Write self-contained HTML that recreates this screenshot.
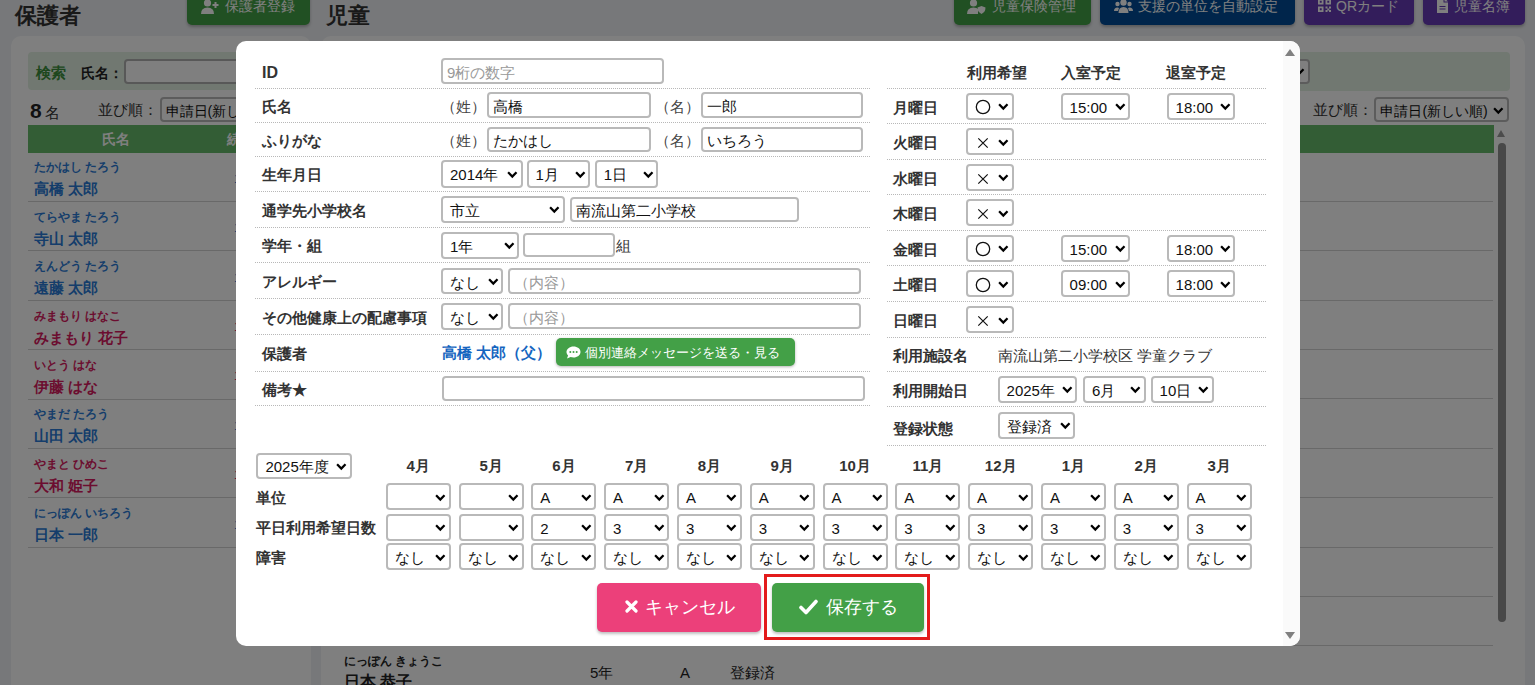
<!DOCTYPE html>
<html lang="ja"><head><meta charset="utf-8"><title>児童</title>
<style>
*{box-sizing:border-box}
html,body{margin:0;padding:0;width:1535px;height:685px;overflow:hidden}
body{background:#eef0f4;font-family:"Liberation Sans",sans-serif;color:#333;position:relative}
div{position:absolute}
.t{white-space:nowrap;font-size:15px;line-height:20px}
.b{font-weight:bold}
.overlay{left:0;top:0;width:1535px;height:685px;background:rgba(0,0,0,.5)}
.modal{left:236px;top:41px;width:1064px;height:605px;background:#fff;border-radius:10px;overflow:hidden}
.inp{border:2px solid #b9b9b9;border-radius:4px;background:#fff}
.inp .st{position:absolute;left:4px;top:calc(50% + 1.5px);transform:translateY(-50%);font-size:15px;line-height:20px;color:#111;white-space:nowrap}
.sel .st{left:7px}
.chev{position:absolute;right:2.6px;top:50%;margin-top:-2.9px}
.dl{height:1px;border-top:1px dotted #b8b8b8}
.btn{border-radius:5px;color:#fff;white-space:nowrap}
.card{background:#fff;border-radius:10px}
.bl{height:1px;background:#d3d3d3}
</style></head><body>

<div class="t b" style="left:15px;top:3px;font-size:22px;line-height:26px;color:#333">保護者</div>
<div class="t b" style="left:326px;top:3px;font-size:22px;line-height:26px;color:#333">児童</div>
<div class="btn" style="left:187px;top:-14px;width:123px;height:38.6px;background:#43a047;box-shadow:0 2px 3px rgba(0,0,0,.25)"><svg style="position:absolute;left:14px;top:13px" width="18" height="15" viewBox="0 0 18 15"><circle cx="6.5" cy="4" r="3.6" fill="#fff"/><path d="M0 15 Q0 8.5 6.5 8.5 Q13 8.5 13 15Z" fill="#fff"/><path d="M14.5 3v6M11.5 6h6" stroke="#fff" stroke-width="2"/></svg><div class="t" style="left:38px;top:10.5px;font-size:14px;line-height:18px;color:#fff">保護者登録</div></div>
<div class="btn" style="left:954px;top:-14px;width:137px;height:38.6px;background:#43a047;box-shadow:0 2px 3px rgba(0,0,0,.25)"><svg style="position:absolute;left:13px;top:13px" width="19" height="15" viewBox="0 0 19 15"><circle cx="6.5" cy="4" r="3.6" fill="#fff"/><path d="M0 15 Q0 8.5 6.5 8.5 Q10 8.5 11 10 L11 15Z" fill="#fff"/><path d="M14.5 7 L18.5 8.5 Q18.5 13 14.5 15 Q10.5 13 10.5 8.5Z" fill="#fff"/></svg><div class="t" style="left:38px;top:10.5px;font-size:14px;line-height:18px;color:#fff">児童保険管理</div></div>
<div class="btn" style="left:1100px;top:-14px;width:195px;height:38.6px;background:#004b96;box-shadow:0 2px 3px rgba(0,0,0,.25)"><svg style="position:absolute;left:14px;top:13px" width="19" height="14" viewBox="0 0 19 14"><circle cx="9.5" cy="3.5" r="3.2" fill="#fff"/><circle cx="3.5" cy="5" r="2.2" fill="#fff"/><circle cx="15.5" cy="5" r="2.2" fill="#fff"/><path d="M4.5 14 Q4.5 8 9.5 8 Q14.5 8 14.5 14Z" fill="#fff"/><path d="M0 12 Q0 8.5 3.5 8.5 Q4.5 8.5 5 9 L4 12Z M19 12 Q19 8.5 15.5 8.5 Q14.5 8.5 14 9 L15 12Z" fill="#fff"/></svg><div class="t" style="left:38px;top:10.5px;font-size:14px;line-height:18px;color:#fff">支援の単位を自動設定</div></div>
<div class="btn" style="left:1304px;top:-14px;width:110px;height:38.6px;background:#673ab7;box-shadow:0 2px 3px rgba(0,0,0,.25)"><svg style="position:absolute;left:14px;top:13px" width="13" height="13" viewBox="0 0 13 13"><path d="M0 0h5.5v5.5H0z M1.8 1.8v1.9h1.9V1.8z M7.5 0H13v5.5H7.5z M9.3 1.8v1.9h1.9V1.8z M0 7.5h5.5V13H0z M1.8 9.3v1.9h1.9V9.3z" fill="#fff" fill-rule="evenodd"/><path d="M7.5 7.5h2v2h-2zM11 7.5h2v2h-2zM9.3 9.5h2v2h-2zM7.5 11h2v2h-2zM11 11h2v2h-2z" fill="#fff"/></svg><div class="t" style="left:32px;top:10.5px;font-size:14px;line-height:18px;color:#fff">QRカード</div></div>
<div class="btn" style="left:1423px;top:-14px;width:102px;height:38.6px;background:#673ab7;box-shadow:0 2px 3px rgba(0,0,0,.25)"><svg style="position:absolute;left:14px;top:12px" width="11" height="15" viewBox="0 0 11 15"><path d="M0 0h6.5v4.5H11V15H0z M7.5 0L11 3.5H7.5z" fill="#fff"/><path d="M2.5 8.5h6M2.5 11h6" stroke="#673ab7" stroke-width="1"/></svg><div class="t" style="left:31px;top:10.5px;font-size:14px;line-height:18px;color:#fff">児童名簿</div></div>
<div class="card" style="left:11px;top:36px;width:299.5px;height:700px"></div>
<div style="left:28px;top:52px;width:300px;height:38px;background:#e2f1e2;border-radius:4px"></div>
<div class="t b" style="left:36px;top:63px;color:#3c8f3c;font-size:15px">検索</div>
<div class="t b" style="left:81px;top:63px;color:#222;font-size:14px">氏名：</div>
<div class="inp" style="left:123.7px;top:58.7px;width:206.3px;height:25.3px;border-color:#b0b0b0"></div>
<div class="t b" style="left:30px;top:99px;font-size:21px;line-height:24px;color:#222">8</div>
<div class="t" style="left:45px;top:103px;font-size:15px;color:#333">名</div>
<div class="t" style="left:98px;top:100px;font-size:15px;color:#333">並び順：</div>
<div class="inp sel" style="left:159.5px;top:96.7px;width:170.5px;height:25.5px;"><span class="st" style="left:4px;font-size:14px">申請日(新しい順)</span><svg class="chev" width="11" height="8" viewBox="0 0 11 8"><path d="M1.1 1.3 L5.3 5.5 L9.5 1.3" fill="none" stroke="#000" stroke-width="2.3"/></svg></div>
<div style="left:28px;top:125px;width:290px;height:28px;background:#66bb6a"></div>
<div class="t b" style="left:102px;top:129px;color:#fff;font-size:14px">氏名</div>
<div class="t b" style="left:227px;top:129px;color:#fff;font-size:14px">続柄</div>
<div class="t b" style="left:34px;top:160.3px;font-size:12px;line-height:14px;color:#2a7ad6">たかはし たろう</div>
<div class="t b" style="left:34px;top:179.3px;font-size:15px;line-height:20px;color:#2a7ad6">高橋 太郎</div>
<div class="t" style="left:234px;top:168.8px;font-size:13px;color:#2a7ad6">1</div>
<div class="bl" style="left:28px;top:201px;width:290px"></div>
<div class="t b" style="left:34px;top:209.70000000000002px;font-size:12px;line-height:14px;color:#2a7ad6">てらやま たろう</div>
<div class="t b" style="left:34px;top:228.70000000000002px;font-size:15px;line-height:20px;color:#2a7ad6">寺山 太郎</div>
<div class="t" style="left:234px;top:218.20000000000002px;font-size:13px;color:#2a7ad6">1</div>
<div class="bl" style="left:28px;top:250px;width:290px"></div>
<div class="t b" style="left:34px;top:259.1px;font-size:12px;line-height:14px;color:#2a7ad6">えんどう たろう</div>
<div class="t b" style="left:34px;top:278.1px;font-size:15px;line-height:20px;color:#2a7ad6">遠藤 太郎</div>
<div class="t" style="left:234px;top:267.6px;font-size:13px;color:#2a7ad6">1</div>
<div class="bl" style="left:28px;top:300px;width:290px"></div>
<div class="t b" style="left:34px;top:308.5px;font-size:12px;line-height:14px;color:#d81b60">みまもり はなこ</div>
<div class="t b" style="left:34px;top:327.5px;font-size:15px;line-height:20px;color:#d81b60">みまもり 花子</div>
<div class="t" style="left:234px;top:317.0px;font-size:13px;color:#d81b60">1</div>
<div class="bl" style="left:28px;top:349px;width:290px"></div>
<div class="t b" style="left:34px;top:357.9px;font-size:12px;line-height:14px;color:#d81b60">いとう はな</div>
<div class="t b" style="left:34px;top:376.9px;font-size:15px;line-height:20px;color:#d81b60">伊藤 はな</div>
<div class="t" style="left:234px;top:366.4px;font-size:13px;color:#d81b60">1</div>
<div class="bl" style="left:28px;top:399px;width:290px"></div>
<div class="t b" style="left:34px;top:407.3px;font-size:12px;line-height:14px;color:#2a7ad6">やまだ たろう</div>
<div class="t b" style="left:34px;top:426.3px;font-size:15px;line-height:20px;color:#2a7ad6">山田 太郎</div>
<div class="t" style="left:234px;top:415.8px;font-size:13px;color:#2a7ad6">1</div>
<div class="bl" style="left:28px;top:448px;width:290px"></div>
<div class="t b" style="left:34px;top:456.7px;font-size:12px;line-height:14px;color:#d81b60">やまと ひめこ</div>
<div class="t b" style="left:34px;top:475.7px;font-size:15px;line-height:20px;color:#d81b60">大和 姫子</div>
<div class="t" style="left:234px;top:465.2px;font-size:13px;color:#d81b60">1</div>
<div class="bl" style="left:28px;top:497px;width:290px"></div>
<div class="t b" style="left:34px;top:506.1px;font-size:12px;line-height:14px;color:#2a7ad6">にっぽん いちろう</div>
<div class="t b" style="left:34px;top:525.1px;font-size:15px;line-height:20px;color:#2a7ad6">日本 一郎</div>
<div class="t" style="left:234px;top:514.6px;font-size:13px;color:#2a7ad6">1</div>
<div class="bl" style="left:28px;top:547px;width:290px"></div>
<div class="card" style="left:321px;top:36px;width:1204px;height:700px"></div>
<div style="left:331px;top:52px;width:1178.5px;height:38.5px;background:#e2f1e2;border-radius:4px"></div>
<div class="t" style="left:1312.5px;top:100px;font-size:15px;color:#333">並び順：</div>
<div class="inp sel" style="left:1374.4px;top:96.6px;width:134.2px;height:25.7px;"><span class="st" style="left:4px;font-size:14px">申請日(新しい順)</span><svg class="chev" width="11" height="8" viewBox="0 0 11 8"><path d="M1.1 1.3 L5.3 5.5 L9.5 1.3" fill="none" stroke="#000" stroke-width="2.3"/></svg></div>
<div class="inp sel" style="left:1200px;top:58.7px;width:110px;height:25.3px;"><span class="st" style=""></span><svg class="chev" width="11" height="8" viewBox="0 0 11 8"><path d="M1.1 1.3 L5.3 5.5 L9.5 1.3" fill="none" stroke="#000" stroke-width="2.3"/></svg></div>
<div style="left:331px;top:125px;width:1163px;height:27.6px;background:#66bb6a"></div>
<div class="bl" style="left:331px;top:201px;width:1162px"></div>
<div class="bl" style="left:331px;top:250px;width:1162px"></div>
<div class="bl" style="left:331px;top:300px;width:1162px"></div>
<div class="bl" style="left:331px;top:349px;width:1162px"></div>
<div class="bl" style="left:331px;top:398px;width:1162px"></div>
<div class="bl" style="left:331px;top:448px;width:1162px"></div>
<div class="bl" style="left:331px;top:497px;width:1162px"></div>
<div class="bl" style="left:331px;top:547px;width:1162px"></div>
<div class="bl" style="left:331px;top:596px;width:1162px"></div>
<div class="bl" style="left:331px;top:645px;width:1162px"></div>
<div style="left:1497px;top:130px;width:0;height:0;border-left:4.5px solid transparent;border-right:4.5px solid transparent;border-bottom:7px solid #999"></div>
<div style="left:1497.5px;top:142.6px;width:8.5px;height:479px;background:#909090;border-radius:4px"></div>
<div class="t b" style="left:344px;top:654px;font-size:12px;line-height:14px;color:#222">にっぽん きょうこ</div>
<div class="t b" style="left:344px;top:672px;font-size:16px;line-height:20px;color:#222">日本 恭子</div>
<div class="t" style="left:590px;top:663px;font-size:15px;color:#222">5年</div>
<div class="t" style="left:680px;top:663px;font-size:15px;color:#222">A</div>
<div class="t" style="left:730px;top:663px;font-size:15px;color:#222">登録済</div>
<div class="overlay"></div>
<div class="modal"></div>
<div style="left:1282.5px;top:41px;width:17.5px;height:605px;background:#fafafa;border-radius:0 10px 10px 0"></div>
<div style="left:1285px;top:48.9px;width:0;height:0;border-left:5px solid transparent;border-right:5px solid transparent;border-bottom:7px solid #808080"></div>
<div style="left:1285px;top:632.2px;width:0;height:0;border-left:5px solid transparent;border-right:5px solid transparent;border-top:7px solid #808080"></div>
<div class="dl" style="left:255px;top:88px;width:615px"></div>
<div class="dl" style="left:255px;top:122px;width:615px"></div>
<div class="dl" style="left:255px;top:156px;width:615px"></div>
<div class="dl" style="left:255px;top:191px;width:615px"></div>
<div class="dl" style="left:255px;top:227px;width:615px"></div>
<div class="dl" style="left:255px;top:262px;width:615px"></div>
<div class="dl" style="left:255px;top:298px;width:615px"></div>
<div class="dl" style="left:255px;top:334px;width:615px"></div>
<div class="dl" style="left:255px;top:371px;width:615px"></div>
<div class="dl" style="left:255px;top:405px;width:615px"></div>
<div class="t b" style="left:262px;top:62.5px;font-size:16px">ID</div>
<div class="t b" style="left:262px;top:96.5px;">氏名</div>
<div class="t b" style="left:262px;top:130.5px;">ふりがな</div>
<div class="t b" style="left:262px;top:165.0px;">生年月日</div>
<div class="t b" style="left:262px;top:200.5px;">通学先小学校名</div>
<div class="t b" style="left:262px;top:236.0px;">学年・組</div>
<div class="t b" style="left:262px;top:271.5px;">アレルギー</div>
<div class="t b" style="left:262px;top:307.5px;">その他健康上の配慮事項</div>
<div class="t b" style="left:262px;top:344.0px;">保護者</div>
<div class="t b" style="left:262px;top:379.5px;">備考★</div>
<div class="inp" style="left:441px;top:58px;width:223px;height:26px;"><span class="st" style="color:#999">9桁の数字</span></div>
<div class="t" style="left:441px;top:96.5px;color:#444">（姓）</div>
<div class="inp" style="left:487.3px;top:92.3px;width:163.7px;height:25.5px;"><span class="st">高橋</span></div>
<div class="t" style="left:655px;top:96.5px;color:#444">（名）</div>
<div class="inp" style="left:700.6px;top:92.3px;width:162.7px;height:25.5px;"><span class="st">一郎</span></div>
<div class="t" style="left:441px;top:130.8px;color:#444">（姓）</div>
<div class="inp" style="left:487.3px;top:126.5px;width:163.7px;height:25.5px;"><span class="st">たかはし</span></div>
<div class="t" style="left:655px;top:130.8px;color:#444">（名）</div>
<div class="inp" style="left:700.6px;top:126.5px;width:162.7px;height:25.5px;"><span class="st">いちろう</span></div>
<div class="inp sel" style="left:441px;top:160px;width:81.5px;height:27.5px;"><span class="st" style="">2014年</span><svg class="chev" width="11" height="8" viewBox="0 0 11 8"><path d="M1.1 1.3 L5.3 5.5 L9.5 1.3" fill="none" stroke="#000" stroke-width="2.3"/></svg></div>
<div class="inp sel" style="left:526.5px;top:160px;width:63.9px;height:27.5px;"><span class="st" style="">1月</span><svg class="chev" width="11" height="8" viewBox="0 0 11 8"><path d="M1.1 1.3 L5.3 5.5 L9.5 1.3" fill="none" stroke="#000" stroke-width="2.3"/></svg></div>
<div class="inp sel" style="left:594.8px;top:160px;width:63.3px;height:27.5px;"><span class="st" style="">1日</span><svg class="chev" width="11" height="8" viewBox="0 0 11 8"><path d="M1.1 1.3 L5.3 5.5 L9.5 1.3" fill="none" stroke="#000" stroke-width="2.3"/></svg></div>
<div class="inp sel" style="left:441px;top:196px;width:124px;height:26.7px;"><span class="st" style="">市立</span><svg class="chev" width="11" height="8" viewBox="0 0 11 8"><path d="M1.1 1.3 L5.3 5.5 L9.5 1.3" fill="none" stroke="#000" stroke-width="2.3"/></svg></div>
<div class="inp" style="left:569.8px;top:197.3px;width:229.6px;height:24.7px;"><span class="st">南流山第二小学校</span></div>
<div class="inp sel" style="left:441px;top:232px;width:78.4px;height:26.6px;"><span class="st" style="">1年</span><svg class="chev" width="11" height="8" viewBox="0 0 11 8"><path d="M1.1 1.3 L5.3 5.5 L9.5 1.3" fill="none" stroke="#000" stroke-width="2.3"/></svg></div>
<div class="inp" style="left:523.2px;top:232.8px;width:92.1px;height:24.7px;"></div>
<div class="t" style="left:616px;top:236px;">組</div>
<div class="inp sel" style="left:441px;top:267.8px;width:62.3px;height:26.7px;"><span class="st" style="">なし</span><svg class="chev" width="11" height="8" viewBox="0 0 11 8"><path d="M1.1 1.3 L5.3 5.5 L9.5 1.3" fill="none" stroke="#000" stroke-width="2.3"/></svg></div>
<div class="inp" style="left:507.7px;top:268.3px;width:353.8px;height:25.5px;"><span class="st" style="color:#999">（内容）</span></div>
<div class="inp sel" style="left:441px;top:303px;width:62.3px;height:26.5px;"><span class="st" style="">なし</span><svg class="chev" width="11" height="8" viewBox="0 0 11 8"><path d="M1.1 1.3 L5.3 5.5 L9.5 1.3" fill="none" stroke="#000" stroke-width="2.3"/></svg></div>
<div class="inp" style="left:507.7px;top:303.4px;width:353.8px;height:25.6px;"><span class="st" style="color:#999">（内容）</span></div>
<div class="t b" style="left:442px;top:343px;color:#1565c0">高橋 太郎（父）</div>
<div class="btn" style="left:556px;top:338.2px;width:238.7px;height:28.3px;background:#43a047;box-shadow:0 1px 3px rgba(0,0,0,.3)"><svg style="position:absolute;left:10px;top:7.5px" width="15" height="13" viewBox="0 0 15 13"><path d="M7.5 0.5C3.6 0.5 0.5 3 0.5 6c0 1.3 0.6 2.5 1.6 3.4L1 12.5l3.6-1.6c0.9 0.3 1.9 0.5 2.9 0.5 3.9 0 7-2.5 7-5.5S11.4 0.5 7.5 0.5z" fill="#fff"/><circle cx="4.3" cy="6" r="1" fill="#43a047"/><circle cx="7.5" cy="6" r="1" fill="#43a047"/><circle cx="10.7" cy="6" r="1" fill="#43a047"/></svg><div class="t" style="left:29px;top:4.5px;font-size:13px;color:#fff">個別連絡メッセージを送る・見る</div></div>
<div class="inp" style="left:441.5px;top:375.8px;width:423.0px;height:24.8px;"></div>
<div class="dl" style="left:887px;top:88px;width:379px"></div>
<div class="dl" style="left:887px;top:123px;width:379px"></div>
<div class="dl" style="left:887px;top:159px;width:379px"></div>
<div class="dl" style="left:887px;top:194px;width:379px"></div>
<div class="dl" style="left:887px;top:230px;width:379px"></div>
<div class="dl" style="left:887px;top:265px;width:379px"></div>
<div class="dl" style="left:887px;top:301px;width:379px"></div>
<div class="dl" style="left:887px;top:337px;width:379px"></div>
<div class="dl" style="left:887px;top:371px;width:379px"></div>
<div class="dl" style="left:887px;top:406px;width:379px"></div>
<div class="dl" style="left:887px;top:445px;width:379px"></div>
<div class="t b" style="left:967px;top:63px;">利用希望</div>
<div class="t b" style="left:1061px;top:63px;">入室予定</div>
<div class="t b" style="left:1166px;top:63px;">退室予定</div>
<div class="t b" style="left:893px;top:97.5px;">月曜日</div>
<div class="inp sel" style="left:966.2px;top:92.7px;width:47.6px;height:27.0px;"><svg style="position:absolute;left:7.2px;top:4.8px" width="16" height="16" viewBox="0 0 16 16"><circle cx="8" cy="8" r="6.7" fill="none" stroke="#111" stroke-width="1.3"/></svg><svg class="chev" width="11" height="8" viewBox="0 0 11 8"><path d="M1.1 1.3 L5.3 5.5 L9.5 1.3" fill="none" stroke="#000" stroke-width="2.3"/></svg></div>
<div class="inp sel" style="left:1060.6px;top:92.7px;width:69.7px;height:27.0px;"><span class="st" style="">15:00</span><svg class="chev" width="11" height="8" viewBox="0 0 11 8"><path d="M1.1 1.3 L5.3 5.5 L9.5 1.3" fill="none" stroke="#000" stroke-width="2.3"/></svg></div>
<div class="inp sel" style="left:1166.6px;top:92.7px;width:68.5px;height:27.0px;"><span class="st" style="">18:00</span><svg class="chev" width="11" height="8" viewBox="0 0 11 8"><path d="M1.1 1.3 L5.3 5.5 L9.5 1.3" fill="none" stroke="#000" stroke-width="2.3"/></svg></div>
<div class="t b" style="left:893px;top:133.0px;">火曜日</div>
<div class="inp sel" style="left:966.2px;top:128.2px;width:47.6px;height:27.0px;"><svg style="position:absolute;left:9.2px;top:7.1px" width="12" height="12" viewBox="0 0 12 12"><path d="M1.3 1.3L10.7 10.7M10.7 1.3L1.3 10.7" stroke="#111" stroke-width="1.2"/></svg><svg class="chev" width="11" height="8" viewBox="0 0 11 8"><path d="M1.1 1.3 L5.3 5.5 L9.5 1.3" fill="none" stroke="#000" stroke-width="2.3"/></svg></div>
<div class="t b" style="left:893px;top:168.5px;">水曜日</div>
<div class="inp sel" style="left:966.2px;top:163.7px;width:47.6px;height:27.0px;"><svg style="position:absolute;left:9.2px;top:7.1px" width="12" height="12" viewBox="0 0 12 12"><path d="M1.3 1.3L10.7 10.7M10.7 1.3L1.3 10.7" stroke="#111" stroke-width="1.2"/></svg><svg class="chev" width="11" height="8" viewBox="0 0 11 8"><path d="M1.1 1.3 L5.3 5.5 L9.5 1.3" fill="none" stroke="#000" stroke-width="2.3"/></svg></div>
<div class="t b" style="left:893px;top:204.0px;">木曜日</div>
<div class="inp sel" style="left:966.2px;top:199.2px;width:47.6px;height:27.0px;"><svg style="position:absolute;left:9.2px;top:7.1px" width="12" height="12" viewBox="0 0 12 12"><path d="M1.3 1.3L10.7 10.7M10.7 1.3L1.3 10.7" stroke="#111" stroke-width="1.2"/></svg><svg class="chev" width="11" height="8" viewBox="0 0 11 8"><path d="M1.1 1.3 L5.3 5.5 L9.5 1.3" fill="none" stroke="#000" stroke-width="2.3"/></svg></div>
<div class="t b" style="left:893px;top:239.5px;">金曜日</div>
<div class="inp sel" style="left:966.2px;top:234.7px;width:47.6px;height:27.0px;"><svg style="position:absolute;left:7.2px;top:4.8px" width="16" height="16" viewBox="0 0 16 16"><circle cx="8" cy="8" r="6.7" fill="none" stroke="#111" stroke-width="1.3"/></svg><svg class="chev" width="11" height="8" viewBox="0 0 11 8"><path d="M1.1 1.3 L5.3 5.5 L9.5 1.3" fill="none" stroke="#000" stroke-width="2.3"/></svg></div>
<div class="inp sel" style="left:1060.6px;top:234.7px;width:69.7px;height:27.0px;"><span class="st" style="">15:00</span><svg class="chev" width="11" height="8" viewBox="0 0 11 8"><path d="M1.1 1.3 L5.3 5.5 L9.5 1.3" fill="none" stroke="#000" stroke-width="2.3"/></svg></div>
<div class="inp sel" style="left:1166.6px;top:234.7px;width:68.5px;height:27.0px;"><span class="st" style="">18:00</span><svg class="chev" width="11" height="8" viewBox="0 0 11 8"><path d="M1.1 1.3 L5.3 5.5 L9.5 1.3" fill="none" stroke="#000" stroke-width="2.3"/></svg></div>
<div class="t b" style="left:893px;top:275.0px;">土曜日</div>
<div class="inp sel" style="left:966.2px;top:270.2px;width:47.6px;height:27.0px;"><svg style="position:absolute;left:7.2px;top:4.8px" width="16" height="16" viewBox="0 0 16 16"><circle cx="8" cy="8" r="6.7" fill="none" stroke="#111" stroke-width="1.3"/></svg><svg class="chev" width="11" height="8" viewBox="0 0 11 8"><path d="M1.1 1.3 L5.3 5.5 L9.5 1.3" fill="none" stroke="#000" stroke-width="2.3"/></svg></div>
<div class="inp sel" style="left:1060.6px;top:270.2px;width:69.7px;height:27.0px;"><span class="st" style="">09:00</span><svg class="chev" width="11" height="8" viewBox="0 0 11 8"><path d="M1.1 1.3 L5.3 5.5 L9.5 1.3" fill="none" stroke="#000" stroke-width="2.3"/></svg></div>
<div class="inp sel" style="left:1166.6px;top:270.2px;width:68.5px;height:27.0px;"><span class="st" style="">18:00</span><svg class="chev" width="11" height="8" viewBox="0 0 11 8"><path d="M1.1 1.3 L5.3 5.5 L9.5 1.3" fill="none" stroke="#000" stroke-width="2.3"/></svg></div>
<div class="t b" style="left:893px;top:311.0px;">日曜日</div>
<div class="inp sel" style="left:966.2px;top:306.2px;width:47.6px;height:27.0px;"><svg style="position:absolute;left:9.2px;top:7.1px" width="12" height="12" viewBox="0 0 12 12"><path d="M1.3 1.3L10.7 10.7M10.7 1.3L1.3 10.7" stroke="#111" stroke-width="1.2"/></svg><svg class="chev" width="11" height="8" viewBox="0 0 11 8"><path d="M1.1 1.3 L5.3 5.5 L9.5 1.3" fill="none" stroke="#000" stroke-width="2.3"/></svg></div>
<div class="t b" style="left:893px;top:345.5px;">利用施設名</div>
<div class="t" style="left:997.6px;top:345.5px;">南流山第二小学校区 学童クラブ</div>
<div class="t b" style="left:893px;top:380.5px;">利用開始日</div>
<div class="inp sel" style="left:997.6px;top:375.7px;width:79.7px;height:27.0px;"><span class="st" style="">2025年</span><svg class="chev" width="11" height="8" viewBox="0 0 11 8"><path d="M1.1 1.3 L5.3 5.5 L9.5 1.3" fill="none" stroke="#000" stroke-width="2.3"/></svg></div>
<div class="inp sel" style="left:1083px;top:375.7px;width:62.7px;height:27.0px;"><span class="st" style="">6月</span><svg class="chev" width="11" height="8" viewBox="0 0 11 8"><path d="M1.1 1.3 L5.3 5.5 L9.5 1.3" fill="none" stroke="#000" stroke-width="2.3"/></svg></div>
<div class="inp sel" style="left:1150.6px;top:375.7px;width:63.4px;height:27.0px;"><span class="st" style="">10日</span><svg class="chev" width="11" height="8" viewBox="0 0 11 8"><path d="M1.1 1.3 L5.3 5.5 L9.5 1.3" fill="none" stroke="#000" stroke-width="2.3"/></svg></div>
<div class="t b" style="left:893px;top:419px;">登録状態</div>
<div class="inp sel" style="left:997.6px;top:412px;width:77.8px;height:26.5px;"><span class="st" style="">登録済</span><svg class="chev" width="11" height="8" viewBox="0 0 11 8"><path d="M1.1 1.3 L5.3 5.5 L9.5 1.3" fill="none" stroke="#000" stroke-width="2.3"/></svg></div>
<div class="inp sel" style="left:256.4px;top:452.5px;width:95.7px;height:26.8px;"><span class="st" style="">2025年度</span><svg class="chev" width="11" height="8" viewBox="0 0 11 8"><path d="M1.1 1.3 L5.3 5.5 L9.5 1.3" fill="none" stroke="#000" stroke-width="2.3"/></svg></div>
<div class="t b" style="left:385.7px;top:456px;width:65.2px;text-align:center">4月</div>
<div class="inp sel" style="left:385.7px;top:483.2px;width:65.2px;height:27.0px;"><span class="st" style=""></span><svg class="chev" width="11" height="8" viewBox="0 0 11 8"><path d="M1.1 1.3 L5.3 5.5 L9.5 1.3" fill="none" stroke="#000" stroke-width="2.3"/></svg></div>
<div class="inp sel" style="left:385.7px;top:513.5px;width:65.2px;height:27.0px;"><span class="st" style=""></span><svg class="chev" width="11" height="8" viewBox="0 0 11 8"><path d="M1.1 1.3 L5.3 5.5 L9.5 1.3" fill="none" stroke="#000" stroke-width="2.3"/></svg></div>
<div class="inp sel" style="left:385.7px;top:543.3px;width:65.2px;height:27.0px;"><span class="st" style="">なし</span><svg class="chev" width="11" height="8" viewBox="0 0 11 8"><path d="M1.1 1.3 L5.3 5.5 L9.5 1.3" fill="none" stroke="#000" stroke-width="2.3"/></svg></div>
<div class="t b" style="left:458.5px;top:456px;width:65.2px;text-align:center">5月</div>
<div class="inp sel" style="left:458.5px;top:483.2px;width:65.2px;height:27.0px;"><span class="st" style=""></span><svg class="chev" width="11" height="8" viewBox="0 0 11 8"><path d="M1.1 1.3 L5.3 5.5 L9.5 1.3" fill="none" stroke="#000" stroke-width="2.3"/></svg></div>
<div class="inp sel" style="left:458.5px;top:513.5px;width:65.2px;height:27.0px;"><span class="st" style=""></span><svg class="chev" width="11" height="8" viewBox="0 0 11 8"><path d="M1.1 1.3 L5.3 5.5 L9.5 1.3" fill="none" stroke="#000" stroke-width="2.3"/></svg></div>
<div class="inp sel" style="left:458.5px;top:543.3px;width:65.2px;height:27.0px;"><span class="st" style="">なし</span><svg class="chev" width="11" height="8" viewBox="0 0 11 8"><path d="M1.1 1.3 L5.3 5.5 L9.5 1.3" fill="none" stroke="#000" stroke-width="2.3"/></svg></div>
<div class="t b" style="left:531.3px;top:456px;width:65.2px;text-align:center">6月</div>
<div class="inp sel" style="left:531.3px;top:483.2px;width:65.2px;height:27.0px;"><span class="st" style="">A</span><svg class="chev" width="11" height="8" viewBox="0 0 11 8"><path d="M1.1 1.3 L5.3 5.5 L9.5 1.3" fill="none" stroke="#000" stroke-width="2.3"/></svg></div>
<div class="inp sel" style="left:531.3px;top:513.5px;width:65.2px;height:27.0px;"><span class="st" style="">2</span><svg class="chev" width="11" height="8" viewBox="0 0 11 8"><path d="M1.1 1.3 L5.3 5.5 L9.5 1.3" fill="none" stroke="#000" stroke-width="2.3"/></svg></div>
<div class="inp sel" style="left:531.3px;top:543.3px;width:65.2px;height:27.0px;"><span class="st" style="">なし</span><svg class="chev" width="11" height="8" viewBox="0 0 11 8"><path d="M1.1 1.3 L5.3 5.5 L9.5 1.3" fill="none" stroke="#000" stroke-width="2.3"/></svg></div>
<div class="t b" style="left:604.1px;top:456px;width:65.2px;text-align:center">7月</div>
<div class="inp sel" style="left:604.1px;top:483.2px;width:65.2px;height:27.0px;"><span class="st" style="">A</span><svg class="chev" width="11" height="8" viewBox="0 0 11 8"><path d="M1.1 1.3 L5.3 5.5 L9.5 1.3" fill="none" stroke="#000" stroke-width="2.3"/></svg></div>
<div class="inp sel" style="left:604.1px;top:513.5px;width:65.2px;height:27.0px;"><span class="st" style="">3</span><svg class="chev" width="11" height="8" viewBox="0 0 11 8"><path d="M1.1 1.3 L5.3 5.5 L9.5 1.3" fill="none" stroke="#000" stroke-width="2.3"/></svg></div>
<div class="inp sel" style="left:604.1px;top:543.3px;width:65.2px;height:27.0px;"><span class="st" style="">なし</span><svg class="chev" width="11" height="8" viewBox="0 0 11 8"><path d="M1.1 1.3 L5.3 5.5 L9.5 1.3" fill="none" stroke="#000" stroke-width="2.3"/></svg></div>
<div class="t b" style="left:676.9px;top:456px;width:65.2px;text-align:center">8月</div>
<div class="inp sel" style="left:676.9px;top:483.2px;width:65.2px;height:27.0px;"><span class="st" style="">A</span><svg class="chev" width="11" height="8" viewBox="0 0 11 8"><path d="M1.1 1.3 L5.3 5.5 L9.5 1.3" fill="none" stroke="#000" stroke-width="2.3"/></svg></div>
<div class="inp sel" style="left:676.9px;top:513.5px;width:65.2px;height:27.0px;"><span class="st" style="">3</span><svg class="chev" width="11" height="8" viewBox="0 0 11 8"><path d="M1.1 1.3 L5.3 5.5 L9.5 1.3" fill="none" stroke="#000" stroke-width="2.3"/></svg></div>
<div class="inp sel" style="left:676.9px;top:543.3px;width:65.2px;height:27.0px;"><span class="st" style="">なし</span><svg class="chev" width="11" height="8" viewBox="0 0 11 8"><path d="M1.1 1.3 L5.3 5.5 L9.5 1.3" fill="none" stroke="#000" stroke-width="2.3"/></svg></div>
<div class="t b" style="left:749.7px;top:456px;width:65.2px;text-align:center">9月</div>
<div class="inp sel" style="left:749.7px;top:483.2px;width:65.2px;height:27.0px;"><span class="st" style="">A</span><svg class="chev" width="11" height="8" viewBox="0 0 11 8"><path d="M1.1 1.3 L5.3 5.5 L9.5 1.3" fill="none" stroke="#000" stroke-width="2.3"/></svg></div>
<div class="inp sel" style="left:749.7px;top:513.5px;width:65.2px;height:27.0px;"><span class="st" style="">3</span><svg class="chev" width="11" height="8" viewBox="0 0 11 8"><path d="M1.1 1.3 L5.3 5.5 L9.5 1.3" fill="none" stroke="#000" stroke-width="2.3"/></svg></div>
<div class="inp sel" style="left:749.7px;top:543.3px;width:65.2px;height:27.0px;"><span class="st" style="">なし</span><svg class="chev" width="11" height="8" viewBox="0 0 11 8"><path d="M1.1 1.3 L5.3 5.5 L9.5 1.3" fill="none" stroke="#000" stroke-width="2.3"/></svg></div>
<div class="t b" style="left:822.5px;top:456px;width:65.2px;text-align:center">10月</div>
<div class="inp sel" style="left:822.5px;top:483.2px;width:65.2px;height:27.0px;"><span class="st" style="">A</span><svg class="chev" width="11" height="8" viewBox="0 0 11 8"><path d="M1.1 1.3 L5.3 5.5 L9.5 1.3" fill="none" stroke="#000" stroke-width="2.3"/></svg></div>
<div class="inp sel" style="left:822.5px;top:513.5px;width:65.2px;height:27.0px;"><span class="st" style="">3</span><svg class="chev" width="11" height="8" viewBox="0 0 11 8"><path d="M1.1 1.3 L5.3 5.5 L9.5 1.3" fill="none" stroke="#000" stroke-width="2.3"/></svg></div>
<div class="inp sel" style="left:822.5px;top:543.3px;width:65.2px;height:27.0px;"><span class="st" style="">なし</span><svg class="chev" width="11" height="8" viewBox="0 0 11 8"><path d="M1.1 1.3 L5.3 5.5 L9.5 1.3" fill="none" stroke="#000" stroke-width="2.3"/></svg></div>
<div class="t b" style="left:895.3px;top:456px;width:65.2px;text-align:center">11月</div>
<div class="inp sel" style="left:895.3px;top:483.2px;width:65.2px;height:27.0px;"><span class="st" style="">A</span><svg class="chev" width="11" height="8" viewBox="0 0 11 8"><path d="M1.1 1.3 L5.3 5.5 L9.5 1.3" fill="none" stroke="#000" stroke-width="2.3"/></svg></div>
<div class="inp sel" style="left:895.3px;top:513.5px;width:65.2px;height:27.0px;"><span class="st" style="">3</span><svg class="chev" width="11" height="8" viewBox="0 0 11 8"><path d="M1.1 1.3 L5.3 5.5 L9.5 1.3" fill="none" stroke="#000" stroke-width="2.3"/></svg></div>
<div class="inp sel" style="left:895.3px;top:543.3px;width:65.2px;height:27.0px;"><span class="st" style="">なし</span><svg class="chev" width="11" height="8" viewBox="0 0 11 8"><path d="M1.1 1.3 L5.3 5.5 L9.5 1.3" fill="none" stroke="#000" stroke-width="2.3"/></svg></div>
<div class="t b" style="left:968.1px;top:456px;width:65.2px;text-align:center">12月</div>
<div class="inp sel" style="left:968.1px;top:483.2px;width:65.2px;height:27.0px;"><span class="st" style="">A</span><svg class="chev" width="11" height="8" viewBox="0 0 11 8"><path d="M1.1 1.3 L5.3 5.5 L9.5 1.3" fill="none" stroke="#000" stroke-width="2.3"/></svg></div>
<div class="inp sel" style="left:968.1px;top:513.5px;width:65.2px;height:27.0px;"><span class="st" style="">3</span><svg class="chev" width="11" height="8" viewBox="0 0 11 8"><path d="M1.1 1.3 L5.3 5.5 L9.5 1.3" fill="none" stroke="#000" stroke-width="2.3"/></svg></div>
<div class="inp sel" style="left:968.1px;top:543.3px;width:65.2px;height:27.0px;"><span class="st" style="">なし</span><svg class="chev" width="11" height="8" viewBox="0 0 11 8"><path d="M1.1 1.3 L5.3 5.5 L9.5 1.3" fill="none" stroke="#000" stroke-width="2.3"/></svg></div>
<div class="t b" style="left:1040.9px;top:456px;width:65.2px;text-align:center">1月</div>
<div class="inp sel" style="left:1040.9px;top:483.2px;width:65.2px;height:27.0px;"><span class="st" style="">A</span><svg class="chev" width="11" height="8" viewBox="0 0 11 8"><path d="M1.1 1.3 L5.3 5.5 L9.5 1.3" fill="none" stroke="#000" stroke-width="2.3"/></svg></div>
<div class="inp sel" style="left:1040.9px;top:513.5px;width:65.2px;height:27.0px;"><span class="st" style="">3</span><svg class="chev" width="11" height="8" viewBox="0 0 11 8"><path d="M1.1 1.3 L5.3 5.5 L9.5 1.3" fill="none" stroke="#000" stroke-width="2.3"/></svg></div>
<div class="inp sel" style="left:1040.9px;top:543.3px;width:65.2px;height:27.0px;"><span class="st" style="">なし</span><svg class="chev" width="11" height="8" viewBox="0 0 11 8"><path d="M1.1 1.3 L5.3 5.5 L9.5 1.3" fill="none" stroke="#000" stroke-width="2.3"/></svg></div>
<div class="t b" style="left:1113.7px;top:456px;width:65.2px;text-align:center">2月</div>
<div class="inp sel" style="left:1113.7px;top:483.2px;width:65.2px;height:27.0px;"><span class="st" style="">A</span><svg class="chev" width="11" height="8" viewBox="0 0 11 8"><path d="M1.1 1.3 L5.3 5.5 L9.5 1.3" fill="none" stroke="#000" stroke-width="2.3"/></svg></div>
<div class="inp sel" style="left:1113.7px;top:513.5px;width:65.2px;height:27.0px;"><span class="st" style="">3</span><svg class="chev" width="11" height="8" viewBox="0 0 11 8"><path d="M1.1 1.3 L5.3 5.5 L9.5 1.3" fill="none" stroke="#000" stroke-width="2.3"/></svg></div>
<div class="inp sel" style="left:1113.7px;top:543.3px;width:65.2px;height:27.0px;"><span class="st" style="">なし</span><svg class="chev" width="11" height="8" viewBox="0 0 11 8"><path d="M1.1 1.3 L5.3 5.5 L9.5 1.3" fill="none" stroke="#000" stroke-width="2.3"/></svg></div>
<div class="t b" style="left:1186.5px;top:456px;width:65.2px;text-align:center">3月</div>
<div class="inp sel" style="left:1186.5px;top:483.2px;width:65.2px;height:27.0px;"><span class="st" style="">A</span><svg class="chev" width="11" height="8" viewBox="0 0 11 8"><path d="M1.1 1.3 L5.3 5.5 L9.5 1.3" fill="none" stroke="#000" stroke-width="2.3"/></svg></div>
<div class="inp sel" style="left:1186.5px;top:513.5px;width:65.2px;height:27.0px;"><span class="st" style="">3</span><svg class="chev" width="11" height="8" viewBox="0 0 11 8"><path d="M1.1 1.3 L5.3 5.5 L9.5 1.3" fill="none" stroke="#000" stroke-width="2.3"/></svg></div>
<div class="inp sel" style="left:1186.5px;top:543.3px;width:65.2px;height:27.0px;"><span class="st" style="">なし</span><svg class="chev" width="11" height="8" viewBox="0 0 11 8"><path d="M1.1 1.3 L5.3 5.5 L9.5 1.3" fill="none" stroke="#000" stroke-width="2.3"/></svg></div>
<div class="t b" style="left:256.4px;top:487.5px;">単位</div>
<div class="t b" style="left:256.4px;top:517.5px;">平日利用希望日数</div>
<div class="t b" style="left:256.4px;top:547.5px;">障害</div>
<div class="btn" style="left:597px;top:583px;width:164px;height:49px;background:#ec407a;box-shadow:0 2px 3px rgba(0,0,0,.25)"><svg style="position:absolute;left:28px;top:17px" width="13" height="13" viewBox="0 0 13 13"><path d="M2 2L11 11M11 2L2 11" stroke="#fff" stroke-width="3.2" stroke-linecap="round"/></svg><div class="t" style="left:48px;top:13px;font-size:18px;line-height:22px;color:#fff">キャンセル</div></div>
<div class="btn" style="left:772px;top:583px;width:152px;height:49px;background:#43a047;box-shadow:0 2px 3px rgba(0,0,0,.25)"><svg style="position:absolute;left:27px;top:16px" width="19" height="16" viewBox="0 0 19 16"><path d="M2 8.5L7 13.5L17 2.5" fill="none" stroke="#fff" stroke-width="3.6" stroke-linecap="round" stroke-linejoin="round"/></svg><div class="t" style="left:54px;top:13px;font-size:18px;line-height:22px;color:#fff">保存する</div></div>
<div style="left:764.4px;top:574.2px;width:165.6px;height:65.5px;border:3px solid #e31b1b"></div>
</body></html>
